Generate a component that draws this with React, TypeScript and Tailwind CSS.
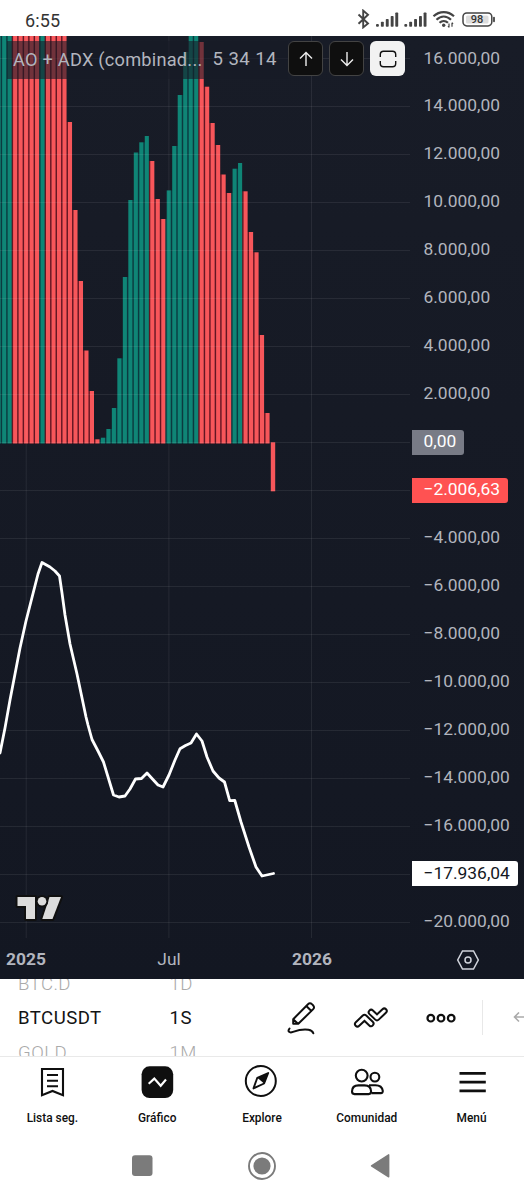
import React from "react";

const ZERO = 407;
const PITCH = 5.487;
const FIRST_X = 70;

type Bar = [color: "r" | "g", top: number];

const older: Bar[] = "gggrrrrrgrrrr".split("").map((c) => [c as "r" | "g", 0]);
const recent: Bar[] = [
  ["r", 86], ["r", 174], ["r", 245], ["r", 314.5], ["r", 355], ["r", 403.3],
  ["g", 401.7], ["g", 393], ["g", 372], ["g", 322.3], ["g", 241], ["g", 164],
  ["g", 116.5], ["g", 106.3], ["g", 100], ["r", 125], ["r", 163], ["r", 183],
  ["g", 154.4], ["g", 110], ["g", 59], ["g", 16], ["g", 0], ["g", 0],
  ["r", 6], ["r", 50.7], ["r", 87], ["r", 109], ["r", 138.5], ["r", 157],
  ["g", 132.7], ["g", 127], ["r", 155.3], ["r", 196], ["r", 216.3],
  ["r", 299], ["r", 377],
];
const bars = [...older, ...recent];

const fill = { r: "#f7565a", g: "#0f8576" };
const edge = { r: "#641522", g: "#0b3a40" };

const adx =
  "0,717 5,692 10,664 15,638 20,612 26,585 38,538 42,526.5 50,531 55,535 59.5,540 62,557 65,579 70,608 77,638 86,681 88,689 92,703.5 98,715 103.5,726 113.5,759 119,761 125,760 130,753 135.5,743 141.5,742.5 147,737 152,742.5 158,749 163,751 169,739 175,724 180,712.7 185.5,709.5 191,707 196.5,698 202,705 207,721 213,735 219,742 224.5,746 229.7,764.7 234.8,764.5 241,786 249,811 256,831 262,840 273.5,837.5";

function Chart() {
  return (
    <svg width="412" height="943" viewBox="0 0 412 943" className="block shrink-0">
      {bars.slice(1).map((b, j) => {
        const i = j + 1;
        const top = Math.max(b[1], bars[i - 1][1]);
        return (
          <rect key={i} x={FIRST_X + (i - 13.5) * PITCH - 1} y={top} width={2} height={ZERO - top + 0.5} fill={edge[b[0]]} />
        );
      })}
      {bars.map((b, i) => (
        <rect key={i} x={FIRST_X + (i - 13) * PITCH - 2.05} y={b[1]} width={4.1} height={ZERO - b[1] + 0.5} fill={fill[b[0]]} />
      ))}
      <rect x="270.8" y="406.3" width="4.4" height="49" fill={fill.r} />
      <g stroke="#ffffff" strokeOpacity="0.075">
        {Array.from({ length: 19 }, (_, i) => (
          <path key={i} d={`M0 ${22.5 + i * 48}H410`} />
        ))}
        {[26.2, 168.9, 311.5].map((x) => (
          <path key={x} d={`M${x} 0V902`} />
        ))}
      </g>
      <polyline points={adx} fill="none" stroke="#fff" strokeWidth="2.8" strokeLinejoin="round" strokeLinecap="round" />
      <g fill="#dcdcdc" stroke="#101010" strokeWidth="4" strokeLinejoin="round" paintOrder="stroke">
        <path d="M17.5 861H35V883H26V870H17.5z" />
        <path d="M49.5 861H61L52.5 883H42.3z" />
        <circle cx="42" cy="865.2" r="4.3" />
      </g>
    </svg>
  );
}

const scale = [
  "16.000,00", "14.000,00", "12.000,00", "10.000,00", "8.000,00", "6.000,00", "4.000,00", "2.000,00",
  "0,00", "−2.006,63", "−4.000,00", "−6.000,00", "−8.000,00", "−10.000,00", "−12.000,00", "−14.000,00",
  "−16.000,00", "−17.936,04", "−20.000,00",
];

function tag(label: string) {
  if (label === "0,00") return "bg-[#787b86] text-white rounded-r-[3px] pr-2";
  if (label === "−2.006,63") return "bg-[#ff5252] text-white rounded-r-[3px] pr-2";
  if (label === "−17.936,04") return "bg-white text-[#131722] rounded-r-[3px] pr-2";
  return "text-[#b2b5be]";
}

function PriceScale() {
  return (
    <div className="flex flex-col pt-[10px]">
      {scale.map((s) => (
        <div key={s} className="flex h-[47.96px] items-start">
          <div className={"flex h-[25px] items-center whitespace-nowrap pl-[11.5px] text-[17.4px] leading-[25px] " + tag(s)}>
            <span className="-mt-[1px]">{s}</span>
          </div>
        </div>
      ))}
    </div>
  );
}

function StatusBar() {
  return (
    <div className="flex h-9 shrink-0 items-center justify-between bg-white pl-[25px] pr-[28px] pt-[5px]">
      <span className="text-[18px] leading-6 tracking-[0.1px] text-[#333]">6:55</span>
      <svg width="139" height="20" viewBox="357 9 139 20" fill="none" stroke="#444" className="mt-[-3px]">
        <path d="M358.5 14.5 368 23.5 363.2 27.4V10.6L368 14.7 358.5 23.8" strokeWidth="1.9" />
        {[376, 404.3].map((x) => (
          <g key={x} fill="#444" stroke="none">
            <rect x={x} y="24" width="2.9" height="2.8" rx="1" />
            <rect x={x + 4.9} y="21.8" width="2.9" height="5" rx=".8" />
            <rect x={x + 9.8} y="19" width="2.9" height="7.8" rx=".8" />
            <rect x={x + 14.7} y="16" width="2.9" height="10.8" rx=".8" />
            <rect x={x + 19.3} y="12.5" width="2.9" height="14.3" rx=".8" />
          </g>
        ))}
        <g strokeWidth="2.2">
          <path d="M433.5 16.3C439.5 10.8 448 10.8 454 16.3" />
          <path d="M436.5 19.8C441 15.5 446.5 15.5 451 19.8" />
          <path d="M439.5 22.8C442 20.4 445.5 20.4 448 22.8" />
        </g>
        <circle cx="443.7" cy="25.3" r="1.7" fill="#444" stroke="none" />
        <path d="M449 23.5v4M452 22.8v4M448 26l1 1.4M453 24l-1-1.4" strokeWidth="1.2" />
        <rect x="463" y="12.9" width="28.8" height="13" rx="3.8" strokeWidth="1.5" />
        <rect x="466" y="15.5" width="22.5" height="8" rx="1.5" fill="#ddd" stroke="none" />
        <path d="M494 17.7v3.6" strokeWidth="1.8" strokeLinecap="round" />
        <text x="477" y="23.2" textAnchor="middle" fill="#333" stroke="none" className="text-[11px] font-medium">98</text>
      </svg>
    </div>
  );
}

const arrows = ["M8 15V1.5M2 7.5 8 1.5 14 7.5", "M8 1V14.5M2 8.5 8 14.5 14 8.5"];

function Legend() {
  return (
    <div className="absolute left-[7px] top-[5px] flex items-start">
      <div className="flex h-[38px] w-[281px] items-center bg-[#171b26]/60 pl-[6px] text-[18.2px] text-[#b2b5be]">
        <span className="w-[199.5px] whitespace-nowrap tracking-[0.24px]">AO + ADX (combinad...</span>
        <span className="whitespace-nowrap text-[18.6px] tracking-[0.42px]">5 34 14</span>
      </div>
      <div className="flex gap-[6px]">
        {arrows.map((d) => (
          <div key={d} className="flex size-[35px] items-center justify-center rounded-[6px] border border-[#434343] bg-[#0f0f0f]">
            <svg width="16" height="16" viewBox="0 0 16 16" fill="none" stroke="#eee" strokeWidth="1.4">
              <path d={d} />
            </svg>
          </div>
        ))}
        <div className="flex size-[35px] items-center justify-center rounded-[6px] bg-[#f2f2f2]">
          <svg width="18" height="18" viewBox="0 0 18 18" fill="none" stroke="#111" strokeWidth="1.4">
            <path d="M1.3 7V4.5Q1.3 1.3 4.5 1.3H13.5Q16.7 1.3 16.7 4.5V7M1.3 11V13.5Q1.3 16.7 4.5 16.7H13.5Q16.7 16.7 16.7 13.5V11" />
          </svg>
        </div>
      </div>
    </div>
  );
}

function TimeScale() {
  return (
    <div className="absolute bottom-[7px] left-0 flex h-6 w-full items-center text-[17.4px] leading-[22px] text-[#b2b5be]">
      <span className="-mt-[2px] w-[52px] text-center font-bold">2025</span>
      <span className="-mt-[2px] ml-[91px] w-[52px] text-center">Jul</span>
      <span className="-mt-[2px] ml-[91px] w-[52px] text-center font-bold">2026</span>
      <svg className="ml-[118px]" width="24" height="22" viewBox="0 0 24 22" fill="none" stroke="#d1d4dc" strokeWidth="1.5">
        <path d="M6.5 2H17.5L22.3 11 17.5 20H6.5L1.7 11z" />
        <circle cx="12" cy="11" r="3" />
      </svg>
    </div>
  );
}

function Wheel({ items, className }: { items: string[]; className: string }) {
  return (
    <div className={"flex h-[77px] flex-col justify-center overflow-hidden pt-[2px] text-[18.6px] tracking-[0.45px] " + className}>
      {items.map((t, i) => (
        <span key={t} className={i === 1 ? "h-[34.5px] shrink-0 leading-[34.5px] text-[#131313]" : "h-[34.5px] shrink-0 font-light leading-[34.5px] text-[#aaa]"}>
          {t}
        </span>
      ))}
    </div>
  );
}

function Toolbar() {
  return (
    <div className="flex h-[78px] shrink-0 items-center overflow-hidden border-b border-[#e9e9e9] bg-white">
      <Wheel items={["BTC.D", "BTCUSDT", "GOLD"]} className="w-[169.5px] shrink-0 pl-[18px]" />
      <Wheel items={["1D", "1S", "1M"]} className="w-[97.5px] shrink-0" />
      <div className="flex w-[209px] shrink-0">
        <div className="flex w-[70px] justify-center">
          <svg width="30" height="34" viewBox="0 0 30 34" fill="none" stroke="#0f0f0f" strokeWidth="2" strokeLinejoin="round" strokeLinecap="round">
            <path d="M6.2 18.2 21 3.2Q23 1.3 25.2 3.4L26 4.2Q28.1 6.4 26 8.4L11.3 22.8H6.2zM19.3 5 24.4 10M6.4 18.4 11 22.8" />
            <path d="M2.5 27.5C.2 30.6 2.5 32.2 6 30.9C12 28.8 17 28 21.5 28.8C24.5 29.3 25.7 30.5 26.3 32.3" />
          </svg>
        </div>
        <div className="flex w-[68px] justify-center">
          <svg width="36" height="24" viewBox="0 0 36 24" className="mt-[5px]" fill="none" strokeLinecap="round" strokeLinejoin="round">
            <g stroke="#0f0f0f" strokeWidth="7">
              <path d="M4.5 18 11.5 11.4 18 17.6" />
              <path d="M18.2 6.3 24 11.8 31.2 5" />
            </g>
            <g stroke="#fff" strokeWidth="3">
              <path d="M4.5 18 11.5 11.4 18 17.6" />
              <path d="M18.2 6.3 24 11.8 31.2 5" />
            </g>
          </svg>
        </div>
        <div className="flex w-[71px] justify-center">
          <svg width="30" height="34" viewBox="0 0 30 34" fill="none" stroke="#0f0f0f" strokeWidth="2.2">
            <circle cx="4.8" cy="17.2" r="3.3" />
            <circle cx="15" cy="17.2" r="3.3" />
            <circle cx="25.2" cy="17.2" r="3.3" />
          </svg>
        </div>
      </div>
      <div className="ml-[6px] h-[35px] w-px shrink-0 bg-[#e8e8e8]" />
      <svg className="ml-[30px] shrink-0" width="12" height="12" viewBox="0 0 12 12" fill="none" stroke="#aaa" strokeWidth="1.6">
        <path d="M12 5H1.5M6 .5 1.5 5 6 9.5" />
      </svg>
    </div>
  );
}

const tabs: { label: string; icon: React.ReactNode }[] = [
  {
    label: "Lista seg.",
    icon: (
      <g stroke="#0f0f0f" strokeWidth="2.1">
        <path d="M7 5H28V31.3L17.5 27 7 31.3z" />
        <path d="M12 11H23M12 16.7H23M12 22.3H23" />
      </g>
    ),
  },
  {
    label: "Gráfico",
    icon: (
      <>
        <rect x="1.6" y="2.3" width="31.6" height="31.8" rx="8" fill="#0f0f0f" />
        <path d="M8.7 19.7 14.3 14.6 20.7 21.8 26 15.5" stroke="#fff" strokeWidth="2.1" />
      </>
    ),
  },
  {
    label: "Explore",
    icon: (
      <>
        <circle cx="16.8" cy="17" r="15" stroke="#0f0f0f" strokeWidth="2" />
        <path d="M9.5 24.4 13.3 13.8 24.2 9 20.1 19.5z" stroke="#0f0f0f" strokeWidth="1.9" strokeLinejoin="round" />
        <path d="M13.3 13.8 24.2 9 20.1 19.5z" fill="#0f0f0f" />
      </>
    ),
  },
  {
    label: "Comunidad",
    icon: (
      <g stroke="#0f0f0f" strokeWidth="2.1" strokeLinejoin="round">
        <circle cx="12.7" cy="11.6" r="5.9" />
        <circle cx="25.9" cy="13.1" r="4.4" />
        <path d="M3 27.6C3 23.5 5.5 21.4 9.5 21.4H15.5C19.7 21.4 22.1 23.5 22.1 27.6Q22.1 30.1 19.7 30.1H5.5Q3 30.1 3 27.6z" />
        <path d="M20 21.3H26.5C31 21.3 33.3 23.6 33.8 26.9Q33.9 29.1 31.9 29.1H22.5" />
      </g>
    ),
  },
  { label: "Menú", icon: <path d="M5.5 9.4H31.8M5.5 18.1H31.8M5.5 26.8H31.8" stroke="#0f0f0f" strokeWidth="2.7" /> },
];

function TabBar() {
  return (
    <div className="grid h-[78px] shrink-0 grid-cols-5 bg-white pt-[7px]">
      {tabs.map((t) => (
        <div key={t.label} className="flex flex-col items-center gap-[11px]">
          <svg width="35" height="35" viewBox="0 0 35 35" fill="none">{t.icon}</svg>
          <span className="text-[11.9px] font-medium leading-4 text-[#0f0f0f]">{t.label}</span>
        </div>
      ))}
    </div>
  );
}

function SystemNav() {
  return (
    <div className="flex h-[61px] items-center justify-center gap-[91.5px] bg-white">
      <svg width="28" height="28" viewBox="0 0 28 28"><rect x="3" y="3.3" width="20.5" height="20.7" rx="3" fill="#7b7b7b" /></svg>
      <svg width="28" height="28" viewBox="0 0 28 28">
        <circle cx="14" cy="14" r="13" fill="none" stroke="#7b7b7b" strokeWidth="1.9" />
        <circle cx="14" cy="14" r="8.6" fill="#7b7b7b" />
      </svg>
      <svg width="28" height="28" viewBox="0 0 28 28"><path d="M3.5 13.8 20.7 2.8V24.8z" fill="#7b7b7b" stroke="#7b7b7b" strokeWidth="1.4" strokeLinejoin="round" /></svg>
    </div>
  );
}

export default function App() {
  return (
    <div className="flex h-[1200px] w-[524px] flex-col overflow-hidden bg-white font-['Roboto',sans-serif]">
      <StatusBar />
      <div className="relative flex h-[943px] shrink-0 overflow-hidden bg-linear-to-b from-[#181c27] to-[#131722]">
        <Chart />
        <PriceScale />
        <Legend />
        <TimeScale />
      </div>
      <Toolbar />
      <TabBar />
      <SystemNav />
    </div>
  );
}
